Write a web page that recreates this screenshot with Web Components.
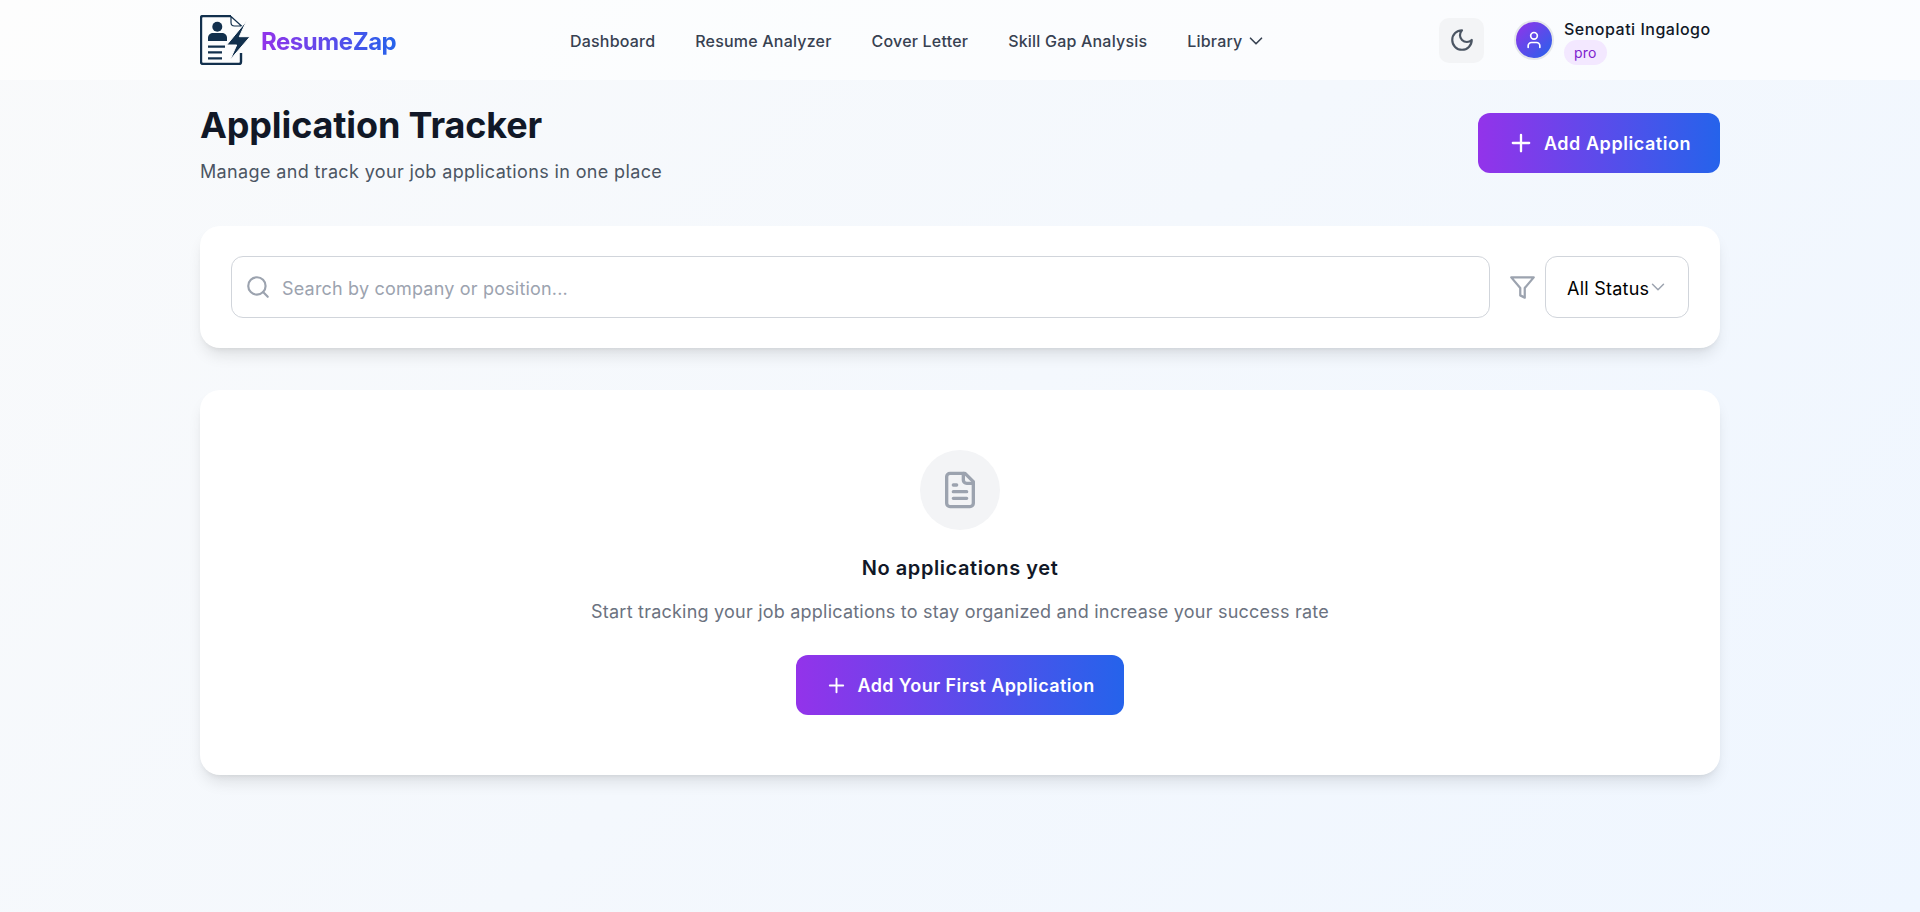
<!DOCTYPE html>
<html lang="en">
<head>
<meta charset="utf-8">
<title>Application Tracker</title>
<style>
    html, body { margin: 0; min-height: 912px; }
    body {
        background: linear-gradient(135deg, #f9fafb 0%, #eff6ff 100%);
        font-family: Inter, sans-serif;
        color: #111827;
    }
</style>
</head>
<body>
<app-nav></app-nav>
<tracker-page>
    <page-head></page-head>
    <search-bar></search-bar>
    <empty-state></empty-state>
</tracker-page>

<script>
const plusIcon = (size) => `<svg width="${size}" height="${size}" viewBox="0 0 24 24" fill="none" stroke="currentColor" stroke-width="2" stroke-linecap="round"><path d="M5 12h14M12 5v14"/></svg>`;

class AppNav extends HTMLElement {
    constructor() {
        super();
        this.attachShadow({ mode: 'open' });
        this.shadowRoot.innerHTML = `
            <style>
                :host { display: block; height: 80px; background: rgba(255,255,255,.6); }
                .inner { width: 1520px; height: 80px; margin: 0 auto; display: flex; align-items: center; }
                .logo { display: flex; align-items: center; gap: 11px; width: 370px; }
                .logo svg { flex: none; }
                .logo span {
                    font-size: 24px; font-weight: 700; line-height: 32px; margin-top: 4px; letter-spacing: -.45px;
                    background: linear-gradient(90deg, #9333ea, #2563eb);
                    -webkit-background-clip: text; background-clip: text; color: transparent;
                }
                nav { display: flex; align-items: center; gap: 40px; width: 869px; padding-top: 2px; box-sizing: border-box; }
                nav a { font-size: 16px; font-weight: 500; color: #374151; display: flex; align-items: center; gap: 3px; line-height: 24px; letter-spacing: .2px; }
                .theme { width: 45px; height: 45px; border-radius: 10px; background: #f3f4f6; color: #4b5563; display: flex; align-items: center; justify-content: center; }
                .user { display: flex; align-items: center; gap: 10px; margin-left: 30px; }
                .avatar { width: 36px; height: 36px; border-radius: 50%; border: 2px solid #e5e7eb; background: linear-gradient(135deg, #9333ea, #2563eb); color: #fff; display: flex; align-items: center; justify-content: center; }
                .who { margin-top: 2px; }
                .name { font-size: 16px; font-weight: 500; line-height: 24px; color: #111827; letter-spacing: .5px; }
                .pro { display: inline-block; font-size: 14px; line-height: 25px; padding: 0 10px; border-radius: 13px; background: #f3e8ff; color: #7e22ce; margin-top: -1px; vertical-align: top; letter-spacing: .2px; }
            </style>
            <div class="inner">
                <div class="logo">
                    <svg width="50" height="50" viewBox="0 0 50 50" fill="none">
                        <path d="M41 38v9a2 2 0 0 1-2 2H3a2 2 0 0 1-2-2V3a2 2 0 0 1 2-2h28" stroke="#12304d" stroke-width="2.4" stroke-linejoin="round"/>
                        <path d="M31 1.500l10.500 9.500h-7a3.500 3.500 0 0 1-3.500-3.500z" stroke="#12304d" stroke-width="1.200" fill="#fff" stroke-linejoin="round"/>
                        <circle cx="17.300" cy="11.700" r="5" fill="#12304d"/>
                        <path d="M8 26v-3c0-3.500 2.500-5 5-5h9c2.500 0 5 1.500 5 5v3z" fill="#12304d"/>
                        <path d="M8 31.700h17M8 37.300h14M8 43.300h14" stroke="#12304d" stroke-width="2.200"/>
                        <path d="M46.700 5.700L26.700 30h10L30 45l20-23.300H39.300z" fill="#12304d" stroke="#fff" stroke-width="1"/>
                    </svg>
                    <span>ResumeZap</span>
                </div>
                <nav>
                    <a>Dashboard</a>
                    <a>Resume Analyzer</a>
                    <a>Cover Letter</a>
                    <a>Skill Gap Analysis</a>
                    <a>Library <svg width="22" height="22" viewBox="0 0 24 24" fill="none" stroke="currentColor" stroke-width="1.800" stroke-linecap="round" stroke-linejoin="round"><path d="m6 9 6 6 6-6"/></svg></a>
                </nav>
                <div class="theme">
                    <svg width="26" height="26" viewBox="0 0 24 24" fill="none" stroke="currentColor" stroke-width="2" stroke-linecap="round" stroke-linejoin="round"><path d="M12 3a6 6 0 0 0 9 9 9 9 0 1 1-9-9Z"/></svg>
                </div>
                <div class="user">
                    <div class="avatar">
                        <svg width="20" height="20" viewBox="0 0 24 24" fill="none" stroke="currentColor" stroke-width="2" stroke-linecap="round" stroke-linejoin="round"><path d="M19 21v-2a4 4 0 0 0-4-4H9a4 4 0 0 0-4 4v2"/><circle cx="12" cy="7" r="4"/></svg>
                    </div>
                    <div class="who">
                        <div class="name">Senopati Ingalogo</div>
                        <span class="pro">pro</span>
                    </div>
                </div>
            </div>
        `;
    }
}

class TrackerPage extends HTMLElement {
    constructor() {
        super();
        this.attachShadow({ mode: 'open' });
        this.shadowRoot.innerHTML = `
            <style>
                :host { display: block; width: 1520px; margin: 0 auto; }
            </style>
            <slot></slot>
        `;
    }
}

class PageHead extends HTMLElement {
    constructor() {
        super();
        this.attachShadow({ mode: 'open' });
        this.shadowRoot.innerHTML = `
            <style>
                :host { display: flex; justify-content: space-between; align-items: flex-start; padding-top: 25px; height: 146px; box-sizing: border-box; }
                h1 { margin: 0; font-size: 36px; line-height: 40px; font-weight: 700; color: #111827; letter-spacing: -.13px; }
                p { margin: 13px 0 0; font-size: 18px; line-height: 28px; color: #4b5563; letter-spacing: .36px; }
                .btn { margin-top: 8px; letter-spacing: .55px; }
            </style>
            <div>
                <h1>Application Tracker</h1>
                <p>Manage and track your job applications in one place</p>
            </div>
            <grad-button class="btn" icon="28" style="width:242px">Add Application</grad-button>
        `;
    }
}

class GradButton extends HTMLElement {
    constructor() {
        super();
        this.attachShadow({ mode: 'open' });
    }

    connectedCallback() {
        this.shadowRoot.innerHTML = `
            <style>
                :host { display: inline-flex; height: 60px; box-sizing: border-box; align-items: center; justify-content: center; gap: 9px; border-radius: 12px; background: linear-gradient(90deg, #9333ea, #2563eb); color: #fff; font-size: 18px; font-weight: 600; letter-spacing: .4px; }
                svg { display: block; }
            </style>
            ${plusIcon(this.getAttribute('icon') || 20)}
            <slot></slot>
        `;
    }
}

class SearchBar extends HTMLElement {
    constructor() {
        super();
        this.attachShadow({ mode: 'open' });
        this.shadowRoot.innerHTML = `
            <style>
                :host { display: flex; align-items: center; height: 122px; box-sizing: border-box; padding: 0 31px; background: #fff; border-radius: 20px; box-shadow: 0 10px 15px -3px rgba(0,0,0,.1), 0 4px 6px -4px rgba(0,0,0,.1); }
                .field { flex: 1; height: 62px; box-sizing: border-box; border: 1px solid #d1d5db; border-radius: 12px; display: flex; align-items: center; gap: 11px; padding-left: 13px; color: #9ca3af; font-size: 18px; letter-spacing: .19px; }
                .field span { margin-top: 2px; }
                .filter { margin: 0 9px 0 19px; color: #9ca3af; display: block; flex: none; }
                .select { width: 144px; height: 62px; box-sizing: border-box; border: 1px solid #d1d5db; border-radius: 12px; display: flex; align-items: center; padding-left: 21px; color: #000; font-size: 18px; letter-spacing: .25px; }
                .select span { margin-top: 2px; }
                .select svg { margin-left: -2px; color: #9ca3af; }
            </style>
            <div class="field">
                <svg width="26" height="26" viewBox="0 0 24 24" fill="none" stroke="currentColor" stroke-width="2" stroke-linecap="round" stroke-linejoin="round"><circle cx="11" cy="11" r="8"/><path d="m21 21-4.300-4.300"/></svg>
                <span>Search by company or position...</span>
            </div>
            <svg class="filter" width="27" height="27" viewBox="0 0 24 24" fill="none" stroke="currentColor" stroke-width="2" stroke-linecap="round" stroke-linejoin="round"><path d="M22 3H2l8 9.460V19l4 2v-8.540z"/></svg>
            <div class="select">
                <span>All Status</span>
                <svg width="22" height="22" viewBox="0 0 24 24" fill="none" stroke="currentColor" stroke-width="1.600" stroke-linecap="round" stroke-linejoin="round"><path d="m6 9 6 6 6-6"/></svg>
            </div>
        `;
    }
}

class EmptyState extends HTMLElement {
    constructor() {
        super();
        this.attachShadow({ mode: 'open' });
        this.shadowRoot.innerHTML = `
            <style>
                :host { display: flex; flex-direction: column; align-items: center; margin-top: 42px; height: 385px; box-sizing: border-box; padding-top: 60px; background: #fff; border-radius: 20px; box-shadow: 0 10px 15px -3px rgba(0,0,0,.1), 0 4px 6px -4px rgba(0,0,0,.1); }
                .circle { width: 80px; height: 80px; border-radius: 50%; background: #f3f4f6; color: #9ca3af; display: flex; align-items: center; justify-content: center; }
                h3 { margin: 24px 0 0; font-size: 20px; line-height: 28px; font-weight: 600; color: #111827; letter-spacing: .58px; }
                p { margin: 16px 0 0; font-size: 18px; line-height: 28px; color: #6b7280; letter-spacing: .22px; }
                grad-button { margin-top: 29px; }
            </style>
            <div class="circle">
                <svg width="40" height="40" viewBox="0 0 24 24" fill="none" stroke="currentColor" stroke-width="2" stroke-linecap="round" stroke-linejoin="round"><path d="M15 2H6a2 2 0 0 0-2 2v16a2 2 0 0 0 2 2h12a2 2 0 0 0 2-2V7Z"/><path d="M14 2v4a2 2 0 0 0 2 2h4"/><path d="M10 9H8M16 13H8M16 17H8"/></svg>
            </div>
            <h3>No applications yet</h3>
            <p>Start tracking your job applications to stay organized and increase your success rate</p>
            <grad-button icon="23" style="width:328px">Add Your First Application</grad-button>
        `;
    }
}

customElements.define('grad-button', GradButton);
customElements.define('app-nav', AppNav);
customElements.define('tracker-page', TrackerPage);
customElements.define('page-head', PageHead);
customElements.define('search-bar', SearchBar);
customElements.define('empty-state', EmptyState);
</script>
</body>
</html>
